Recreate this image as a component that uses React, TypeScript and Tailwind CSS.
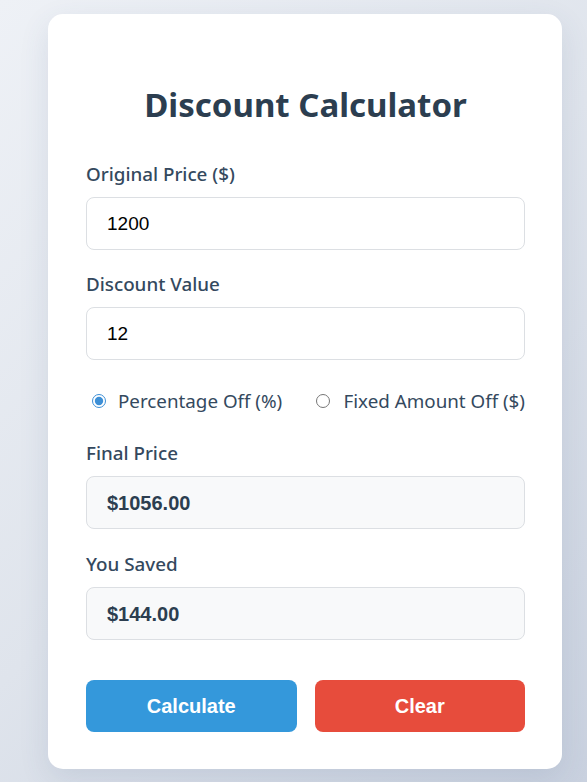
import React, { useState } from "react";

const sans = "font-['Noto_Sans',sans-serif]";
const arial = "font-['Liberation_Sans',Arial,sans-serif]";

export default function App() {
  const [price, setPrice] = useState("1200");
  const [disc, setDisc] = useState("12");
  const [mode, setMode] = useState<"pct" | "fixed">("pct");

  const labelCls = `${sans} block text-[18.8px] leading-[24px] font-medium text-[#34495e]`;

  return (
    <div className="min-h-[782px] w-full bg-[linear-gradient(135deg,#eef1f6_0%,#dfe4ec_50%,#c9d1df_100%)] pt-[14px] pb-[14px]">
      <div className="ml-[48px] w-[514px] rounded-[15px] bg-white pl-[38px] pr-[37px] pt-[71px] pb-[37px] shadow-[0_10px_30px_rgba(60,80,120,0.12)]">
        <h1 className={`${sans} text-center text-[33px] leading-[40px] font-bold text-[#2c3e50]`}>
          Discount Calculator
        </h1>

        <label className={`${labelCls} mt-[37px]`}>Original Price ($)</label>
        <input
          value={price}
          onChange={(e) => setPrice(e.target.value)}
          className={`${arial} mt-[11px] block h-[53px] w-full rounded-[8px] border border-[#dcdfe3] bg-white px-[20px] text-[19px] text-black outline-none`}
        />

        <label className={`${labelCls} mt-[22px]`}>Discount Value</label>
        <input
          value={disc}
          onChange={(e) => setDisc(e.target.value)}
          className={`${arial} mt-[11px] block h-[53px] w-full rounded-[8px] border border-[#dcdfe3] bg-white px-[20px] text-[19px] text-black outline-none`}
        />

        <div className={`${sans} mt-[29px] flex h-[24px] items-center justify-between pl-[6px] text-[18.8px] leading-[24px] text-[#34495e]`}>
          <label className="flex items-center gap-[12px]">
            <input
              type="radio"
              name="mode"
              checked={mode === "pct"}
              onChange={() => setMode("pct")}
              className="m-0 h-[14px] w-[14px] accent-[#3d8fd6]"
            />
            Percentage Off (%)
          </label>
          <label className="flex items-center gap-[14px]">
            <input
              type="radio"
              name="mode"
              checked={mode === "fixed"}
              onChange={() => setMode("fixed")}
              className="m-0 h-[14px] w-[14px] accent-[#3d8fd6]"
            />
            Fixed Amount Off ($)
          </label>
        </div>

        <label className={`${labelCls} mt-[28px]`}>Final Price</label>
        <div className={`${arial} mt-[11px] flex h-[53px] w-full items-center rounded-[8px] border border-[#dcdfe3] bg-[#f8f9fa] px-[20px] text-[20px] font-bold text-[#2c3e50]`}>
          $1056.00
        </div>

        <label className={`${labelCls} mt-[23px]`}>You Saved</label>
        <div className={`${arial} mt-[11px] flex h-[53px] w-full items-center rounded-[8px] border border-[#dcdfe3] bg-[#f8f9fa] px-[20px] text-[20px] font-bold text-[#2c3e50]`}>
          $144.00
        </div>

        <div className="mt-[40px] flex gap-[18px]">
          <button className={`${arial} h-[52px] flex-1 rounded-[8px] bg-[#3498db] text-[20px] font-bold text-white`}>
            Calculate
          </button>
          <button className={`${arial} h-[52px] flex-1 rounded-[8px] bg-[#e74c3c] text-[20px] font-bold text-white`}>
            Clear
          </button>
        </div>
      </div>
    </div>
  );
}
